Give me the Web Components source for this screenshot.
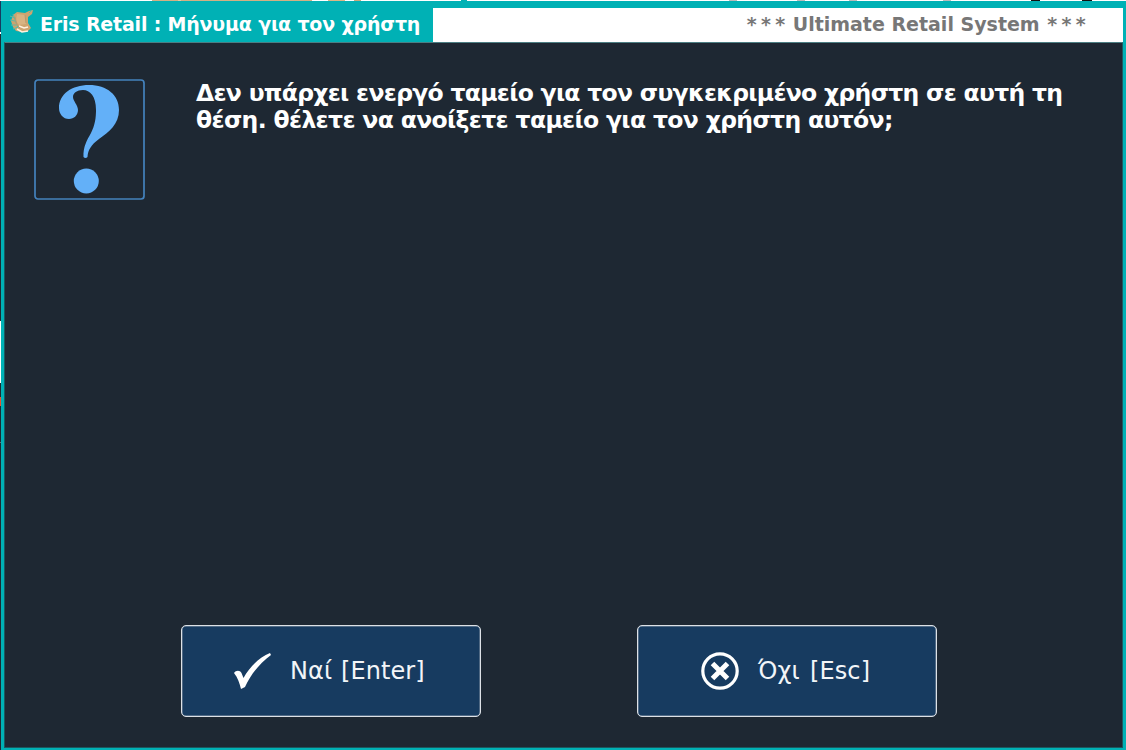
<!DOCTYPE html>
<html lang="el">
<head>
<meta charset="utf-8">
<title>Eris Retail</title>
<style>
  body {
    margin: 0;
    width: 1126px;
    height: 750px;
    overflow: hidden;
    background: #1e2833;
    font-family: "DejaVu Sans", Verdana, sans-serif;
  }

  .second {
    letter-spacing: -0.65px;
  }
</style>
</head>
<body>
<eris-desktop>
  <eris-window>
    <eris-titlebar slot="title" tagline="Ultimate Retail System">Eris Retail : Μήνυμα για τον χρήστη</eris-titlebar>
    <eris-message>
      <span>Δεν υπάρχει ενεργό ταμείο για τον συγκεκριμένο χρήστη σε αυτή τη</span>
      <span class="second">θέση. θέλετε να ανοίξετε ταμείο για τον χρήστη αυτόν;</span>
    </eris-message>
    <eris-button slot="actions" icon="check">Ναί [Enter]</eris-button>
    <eris-button slot="actions" icon="cancel">Όχι [Esc]</eris-button>
  </eris-window>
</eris-desktop>

<script>
class ErisDesktop extends HTMLElement {
  constructor() {
    super();
    this.attachShadow({ mode: 'open' });
    // slivers of the application behind the dialog, on the top and left edges
    this.shadowRoot.innerHTML = `
      <style>
        :host {
          display: block;
          box-sizing: border-box;
          width: 1126px;
          height: 750px;
          padding: 1px 0 0 1px;
          background:
            linear-gradient(90deg, #fff 152px, #d3b083 152px 178px, #e6c9a0 178px 181px, #d3b083 181px 312px, #fff 312px 328px, #dcb685 328px 345px, #fff 345px 354px, #c9a87a 354px 361px, #fff 361px 461px, #00b1b5 461px 467px, #fff 467px 729px, #bbb 729px 737px, #fff 737px 797px, #bbb 797px 805px, #fff 805px 849px, #bbb 849px 857px, #fff 857px 943px, #bbb 943px 951px, #fff 951px 1031px, #111 1031px 1040px, #fff 1040px 1082px, #111 1082px 1092px, #fff 1092px) 0 0 / 100% 1px no-repeat,
            linear-gradient(#173b60 32px, #fff 32px 34px, #1e2833 34px 321px, #fff 321px 383px, #1e2833 383px 397px, #e9502f 397px 406px, #1e2833 406px 442px, #65717b 442px 443px, #1e2833 443px) 0 0 / 1px 100% no-repeat;
        }
      </style>
      <slot></slot>
    `;
  }
}

class ErisWindow extends HTMLElement {
  constructor() {
    super();
    this.attachShadow({ mode: 'open' });
    this.shadowRoot.innerHTML = `
      <style>
        :host {
          display: flex;
          flex-direction: column;
          box-sizing: border-box;
          height: 749px;
          border: solid #00b1b5;
          border-width: 0 3px 2px;
          background: #1e2833;
        }
        .body {
          flex: 1;
          display: flex;
          flex-direction: column;
          justify-content: space-between;
          box-sizing: border-box;
          padding: 36px 30px 30px 29px;
          border: 1px solid #1b5960;
          border-top-color: #4c7e83;
        }
        .actions {
          display: flex;
          gap: 156px;
          padding-left: 147px;
        }
      </style>
      <slot name="title"></slot>
      <div class="body">
        <slot></slot>
        <div class="actions"><slot name="actions"></slot></div>
      </div>
    `;
  }
}

class ErisTitlebar extends HTMLElement {
  constructor() {
    super();
    this.attachShadow({ mode: 'open' });
  }

  connectedCallback() {
    this.shadowRoot.innerHTML = `
      <style>
        :host {
          display: flex;
          box-sizing: border-box;
          height: 41px;
          padding-top: 7px;
          background: #00b1b5;
          font-size: 19px;
          font-weight: 700;
          line-height: 32px;
          white-space: nowrap;
        }
        .caption {
          display: flex;
          box-sizing: border-box;
          width: 429px;
          padding-left: 5px;
          gap: 6px;
          color: #fff;
          letter-spacing: -0.18px;
        }
        .tagline {
          flex: 1;
          box-sizing: border-box;
          padding-right: 33px;
          background: #fff;
          color: #777;
          text-align: right;
          letter-spacing: 0;
        }
        .stars {
          letter-spacing: 4.3px;
        }
        .stars:first-child {
          margin-right: -3.3px;
        }
        .stars:last-child {
          margin-left: 1px;
        }
      </style>
      <div class="caption">
        <svg width="25" height="25" viewBox="0 -1 25 25">
          <path d="M4 6l4-3 8 1 4-2 4-1-1 4-4 3v6l3 5-3 3-5 1-7-1-3-4-2-6z" fill="#cda46f"/>
          <path d="M8 5l8 1 1 9-7 1-3-4z" fill="#d8b381"/>
          <path d="M1 7l5 2M1 11l5 1M2 16l5 0M4 20l5-2M4 5l5 14M20 4l3-3" stroke="#63b7a3" fill="none"/>
          <path d="M10 17l5 2 4-1M8 20l5 3 6-1" stroke="#fff2df" stroke-width="1.5" fill="none"/>
          <path d="M6 8l2 8 3 3M16 6l1 8" stroke="#b99a70" fill="none"/>
        </svg>
        <span><slot></slot></span>
      </div>
      <div class="tagline"><span class="stars">***</span> ${this.getAttribute('tagline') || ''} <span class="stars">***</span></div>
    `;
  }
}

class ErisMessage extends HTMLElement {
  constructor() {
    super();
    this.attachShadow({ mode: 'open' });
    this.shadowRoot.innerHTML = `
      <style>
        :host {
          display: flex;
          align-items: flex-start;
          gap: 51px;
          color: #fff;
        }
        .text {
          display: flex;
          flex-direction: column;
          padding-top: 1px;
          font-size: 23.5px;
          font-weight: 700;
          line-height: 27px;
          letter-spacing: -0.7px;
          white-space: nowrap;
        }
        svg {
          flex: none;
        }
      </style>
      <svg width="111" height="121" viewBox="0 0 111 121">
        <rect x="1" y="1" width="109" height="119" rx="3" fill="none" stroke="#4482bd" stroke-width="1.7"/>
        <path d="M25 29C25 15 38 6 55 6C73 6 85 16 85 31C85 45 75 53 65 60C57 66 54 71 53.500 78Q51.500 80 49.500 78C49 68 53 61 57 54C61 46 62 39 62 31C62 17 56 11 49 11C43 11 39 14 39 18C39 22 44 26 44 31C44 36 40 40 35 40C29 40 25 35 25 29Z" fill="#63b0f8"/>
        <circle cx="52.300" cy="102" r="12.500" fill="#63b0f8"/>
      </svg>
      <div class="text"><slot></slot></div>
    `;
  }
}

const ICONS = {
  check: `
    <svg width="40" height="40" viewBox="0 0 40 40">
      <path d="M2 22C4 19 8 19 9.500 22L11.500 27C17 17 27 6 38 2L39 4C28 12 19 23 13 36L9 38C7.500 32 6 27 2 22Z" fill="#fff"/>
    </svg>`,
  cancel: `
    <svg width="40" height="40" viewBox="0 0 40 40">
      <circle cx="20" cy="20" r="17.200" fill="none" stroke="#fff" stroke-width="3.200"/>
      <path d="M12.500 12.500L27.500 27.500M27.500 12.500L12.500 27.500" stroke="#fff" stroke-width="5"/>
    </svg>`
};

class ErisButton extends HTMLElement {
  constructor() {
    super();
    this.attachShadow({ mode: 'open' });
  }

  connectedCallback() {
    const icon = this.getAttribute('icon');

    this.shadowRoot.innerHTML = `
      <style>
        :host {
          display: block;
        }
        button {
          display: flex;
          align-items: center;
          gap: 18px;
          box-sizing: border-box;
          width: 300px;
          height: 92px;
          margin: 0;
          padding: 0 0 0 ${icon === 'check' ? 50 : 62}px;
          border: 1px solid #dde1e6;
          border-radius: 5px;
          box-shadow: inset 0 0 0 0.5px #8c9bab;
          background: #173b60;
          color: #f2f5f8;
          font: 24px "DejaVu Sans", Verdana, sans-serif;
          letter-spacing: 0.1px;
          word-spacing: ${icon === 'check' ? 1 : 2.5}px;
          white-space: nowrap;
        }
      </style>
      <button>${ICONS[icon]}<span><slot></slot></span></button>
    `;
  }
}

customElements.define('eris-desktop', ErisDesktop);
customElements.define('eris-window', ErisWindow);
customElements.define('eris-titlebar', ErisTitlebar);
customElements.define('eris-message', ErisMessage);
customElements.define('eris-button', ErisButton);
</script>
</body>
</html>
